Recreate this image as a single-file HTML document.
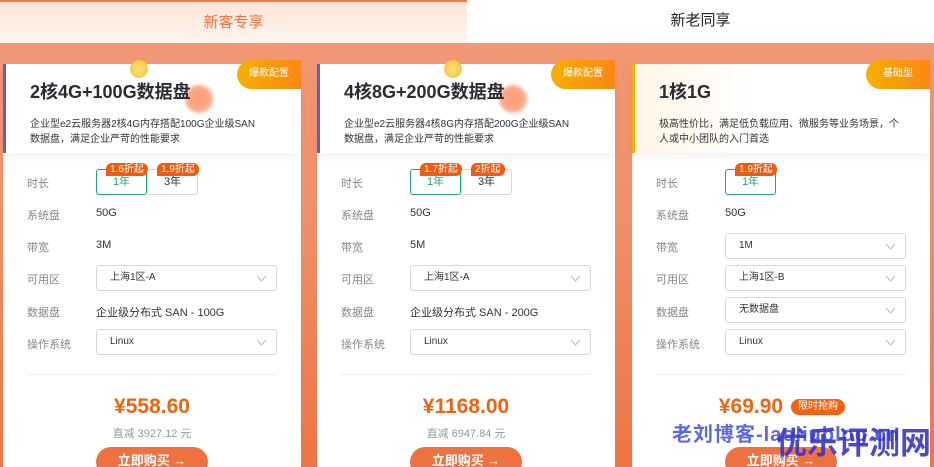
<!DOCTYPE html>
<html><head><meta charset="utf-8"><style>
*{margin:0;padding:0;box-sizing:border-box}
html,body{width:934px;height:467px;overflow:hidden}
body{position:relative;font-family:"Liberation Sans","Noto Sans CJK SC",sans-serif;background:linear-gradient(180deg,#f39a78 0%,#f08d66 50%,#ee7443 100%)}
.tab{position:absolute;top:0;height:43px;font-size:15px;text-align:center;line-height:42px}
.t1{left:0;width:467px;background:linear-gradient(180deg,#fde4d6,#fff5f0);color:#f3743f;border-top:2px solid #f87a3a}
.t2{left:467px;width:467px;background:#fff;color:#222}
.card{position:absolute;top:64px;width:298px;height:410px;background:#fff;border-radius:0 0 4px 4px}
.hd{position:absolute;left:0;top:0;width:100%;height:89px;border-left:3px solid #6c5fa8;box-shadow:0 4px 8px rgba(0,0,0,.05)}
.hd h3{position:absolute;left:24px;top:14px;font-size:18px;font-weight:bold;color:#2b2b33}
.hd p{position:absolute;left:24px;top:53px;font-size:10px;line-height:15px;color:#333;width:230px}
.badge{position:absolute;right:0;top:-4px;width:64px;height:29px;border-radius:15px 0 0 15px;background:linear-gradient(90deg,#f6b000,#fd8614);color:#fff;font-size:10px;text-align:center;line-height:28px}
.ball1{position:absolute;left:124px;top:-4px;width:18px;height:18px;border-radius:50%;background:radial-gradient(#ffe07a,#f5c030);}
.ball2{position:absolute;left:179px;top:21px;width:28px;height:28px;border-radius:50%;background:radial-gradient(#ff9a70,#fbb6a0);filter:blur(1.5px)}
.lb{position:absolute;left:24px;font-size:11px;color:#888}
.vl{position:absolute;left:93px;font-size:11px;color:#333}
.sel{position:absolute;left:93px;width:181px;height:26px;border:1px solid #d5d7dc;border-radius:3px;font-size:10px;color:#333;padding-left:13px;line-height:24px}
.sel:after{content:"";position:absolute;right:11px;top:7px;width:6px;height:6px;border-right:1px solid #bbb;border-bottom:1px solid #bbb;transform:rotate(45deg)}
.opt{position:absolute;top:105px;width:51px;height:26px;border:1px solid #d5d7dc;font-size:11px;text-align:center;line-height:25px;color:#333;border-radius:3px}
.opt.on{border-color:#1ea77a;color:#1ea77a}
.tag{position:absolute;top:-7px;left:9px;height:13px;padding:0 4px;background:#f25a0e;color:#fff;font-size:10px;line-height:13px;border-radius:6px 6px 6px 0;white-space:nowrap}
.hr{position:absolute;left:24px;right:24px;top:310px;border-top:1px solid #eee}
.price{position:absolute;left:0;width:100%;top:331px;text-align:center;font-size:21px;font-weight:bold;color:#f2620f}
.sub{position:absolute;left:0;width:100%;top:361px;text-align:center;font-size:11px;color:#999}
.btn{position:absolute;left:93px;top:383px;width:112px;height:30px;border-radius:15px;background:#ee7140;color:#fff;font-size:13px;font-weight:bold;text-align:center;line-height:28px}
.wm{position:absolute;font-weight:bold;color:#4a58e0;opacity:.9;white-space:nowrap}
</style></head><body>
<div class="tab t1">新客专享</div>
<div class="tab t2">新老同享</div>

<div class="card" style="left:3px">
 <div class="hd"><div class="ball1"></div><div class="ball2"></div><h3>2核4G+100G数据盘</h3><p>企业型e2云服务器2核4G内存搭配100G企业级SAN数据盘，满足企业严苛的性能要求</p><div class="badge">爆款配置</div></div>
 <div class="lb" style="top:111px">时长</div>
 <div class="opt on" style="left:93px"><span class="tag">1.6折起</span>1年</div>
 <div class="opt" style="left:144px"><span class="tag">1.9折起</span>3年</div>
 <div class="lb" style="top:143px">系统盘</div><div class="vl" style="top:143px">50G</div>
 <div class="lb" style="top:175px">带宽</div><div class="vl" style="top:175px">3M</div>
 <div class="lb" style="top:207px">可用区</div><div class="sel" style="top:201px">上海1区-A</div>
 <div class="lb" style="top:240px">数据盘</div><div class="vl" style="top:240px">企业级分布式 SAN - 100G</div>
 <div class="lb" style="top:272px">操作系统</div><div class="sel" style="top:265px">Linux</div>
 <div class="hr"></div>
 <div class="price">¥558.60</div><div class="sub">直减 3927.12 元</div>
 <div class="btn">立即购买 →</div>
</div>

<div class="card" style="left:317px">
 <div class="hd"><div class="ball1"></div><div class="ball2"></div><h3>4核8G+200G数据盘</h3><p>企业型e2云服务器4核8G内存搭配200G企业级SAN数据盘，满足企业严苛的性能要求</p><div class="badge">爆款配置</div></div>
 <div class="lb" style="top:111px">时长</div>
 <div class="opt on" style="left:93px"><span class="tag">1.7折起</span>1年</div>
 <div class="opt" style="left:144px"><span class="tag">2折起</span>3年</div>
 <div class="lb" style="top:143px">系统盘</div><div class="vl" style="top:143px">50G</div>
 <div class="lb" style="top:175px">带宽</div><div class="vl" style="top:175px">5M</div>
 <div class="lb" style="top:207px">可用区</div><div class="sel" style="top:201px">上海1区-A</div>
 <div class="lb" style="top:240px">数据盘</div><div class="vl" style="top:240px">企业级分布式 SAN - 200G</div>
 <div class="lb" style="top:272px">操作系统</div><div class="sel" style="top:265px">Linux</div>
 <div class="hr"></div>
 <div class="price">¥1168.00</div><div class="sub">直减 6947.84 元</div>
 <div class="btn">立即购买 →</div>
</div>

<div class="card" style="left:632px">
 <div class="hd" style="border-left-color:#f6b100;background:linear-gradient(90deg,#fff6e6,#fff 40%)"><h3>1核1G</h3><p style="width:240px">极高性价比，满足低负载应用、微服务等业务场景，个人或中小团队的入门首选</p><div class="badge">基础型</div></div>
 <div class="lb" style="top:111px">时长</div>
 <div class="opt on" style="left:93px"><span class="tag">1.9折起</span>1年</div>
 <div class="lb" style="top:143px">系统盘</div><div class="vl" style="top:143px">50G</div>
 <div class="lb" style="top:175px">带宽</div><div class="sel" style="top:169px">1M</div>
 <div class="lb" style="top:207px">可用区</div><div class="sel" style="top:201px">上海1区-B</div>
 <div class="lb" style="top:240px">数据盘</div><div class="sel" style="top:233px">无数据盘</div>
 <div class="lb" style="top:272px">操作系统</div><div class="sel" style="top:265px">Linux</div>
 <div class="hr"></div>
 <div class="price" style="left:-30px">¥69.90</div>
 <div style="position:absolute;left:159px;top:335px;height:16px;padding:0 7px;border-radius:8px;background:#f2620f;color:#fff;font-size:10px;line-height:16px">限时抢购</div>
 <div class="btn">立即购买 →</div>
</div>

<div class="wm" style="left:672px;top:418px;font-size:20px;letter-spacing:1px">老刘博客-laoliublog.cn</div>
<div class="wm" style="left:776px;top:418px;font-size:31px;color:#3b35c8">优乐评测网</div>
</body></html>
